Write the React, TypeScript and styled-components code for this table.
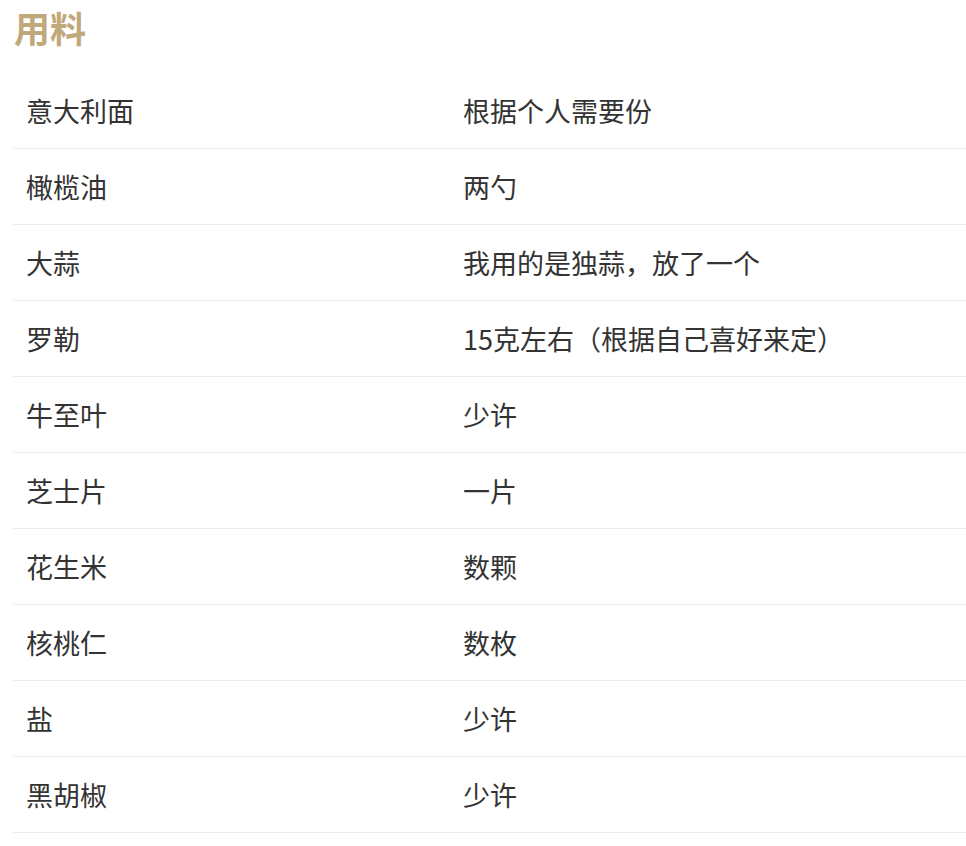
import React from 'react';
import styled, { createGlobalStyle } from 'styled-components';

const GlobalStyle = createGlobalStyle`
  html, body {
    margin: 0;
    padding: 0;
    background: #fff;
  }
  body {
    font-family: "Noto Sans CJK SC", "Noto Sans", sans-serif;
    color: #333;
  }
`;

const Section = styled.section`
  padding: 4px 0 0 13px;
`;

const Title = styled.h2`
  margin: 0 0 0 1px;
  font-size: 36px;
  line-height: 46px;
  font-weight: 700;
  color: #bfa97b;
`;

const Table = styled.div`
  margin-top: 23px;
  width: 1000px;
`;

const Row = styled.div`
  display: grid;
  grid-template-columns: 437px 1fr;
  height: 76px;
  align-items: center;
  border-bottom: 1px solid #ececec;
  box-sizing: border-box;
`;

const Cell = styled.div`
  padding-left: 13px;
  font-size: 27px;
  color: #333;
`;

const ingredients: [string, string][] = [
  ['意大利面', '根据个人需要份'],
  ['橄榄油', '两勺'],
  ['大蒜', '我用的是独蒜，放了一个'],
  ['罗勒', '15克左右（根据自己喜好来定）'],
  ['牛至叶', '少许'],
  ['芝士片', '一片'],
  ['花生米', '数颗'],
  ['核桃仁', '数枚'],
  ['盐', '少许'],
  ['黑胡椒', '少许'],
];

const App = (): JSX.Element => (
  <>
    <GlobalStyle />
    <Section>
      <Title>用料</Title>
      <Table>
        {ingredients.map(([name, amount]) => (
          <Row key={name}>
            <Cell>{name}</Cell>
            <Cell>{amount}</Cell>
          </Row>
        ))}
      </Table>
    </Section>
  </>
);

export default App;
